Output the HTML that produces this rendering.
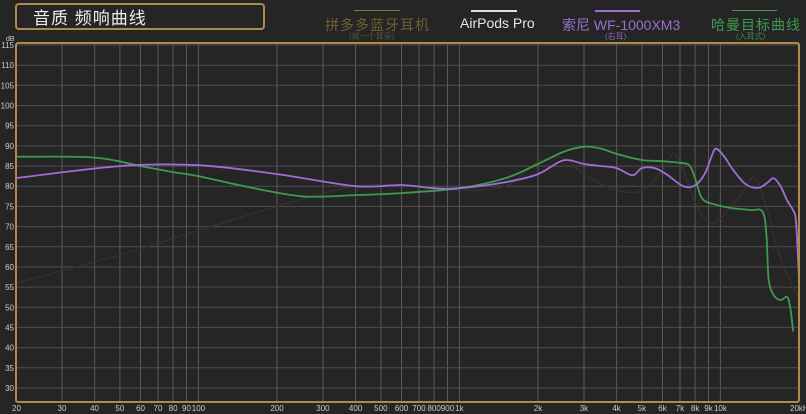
<!DOCTYPE html>
<html><head><meta charset="utf-8">
<style>
html,body{margin:0;padding:0;background:#252525;width:806px;height:414px;overflow:hidden}
body{font-family:"Liberation Sans","Noto Sans CJK SC",sans-serif;position:relative}
.t{position:absolute;white-space:nowrap}
</style></head><body>
<div style="position:absolute;left:15px;top:3px;width:246px;height:23px;border:2px solid #b08a4a;border-radius:4px;"></div>
<div class="t" style="left:33px;top:4px;font-size:17px;color:#eee;letter-spacing:1px">音质 频响曲线</div>

<div style="position:absolute;left:354px;top:10px;width:46px;height:1px;background:#8a7238"></div>
<div class="t" style="left:325px;top:15px;font-size:14px;color:#6f6030;letter-spacing:1px">拼多多蓝牙耳机</div>
<div class="t" style="left:349px;top:31px;font-size:8px;color:#5f5530">(就一个耳朵)</div>

<div style="position:absolute;left:471px;top:10px;width:46px;height:2px;background:#ddd"></div>
<div class="t" style="left:460px;top:15px;font-size:14px;color:#e6e6e6">AirPods Pro</div>

<div style="position:absolute;left:595px;top:10px;width:45px;height:2px;background:#9a6fd0"></div>
<div class="t" style="left:562px;top:15px;font-size:14px;color:#9a6fd0">索尼 WF-1000XM3</div>
<div class="t" style="left:605px;top:31px;font-size:8px;color:#8a60c0">(右耳)</div>

<div style="position:absolute;left:732px;top:10px;width:45px;height:1px;background:#3f9a4f"></div>
<div class="t" style="left:711px;top:15px;font-size:14px;color:#3f9a4f;letter-spacing:1px">哈曼目标曲线</div>
<div class="t" style="left:736px;top:31px;font-size:8px;color:#3a8a48">(入耳式)</div>

<svg id="s" width="806" height="414" style="position:absolute;left:0;top:0" xmlns="http://www.w3.org/2000/svg"></svg>
<script>
var L=16,R=799,T=43,B=402;
function X(f){return L+(R-L)*Math.log10(f/20)/3}
function Y(v){return 45+(115-v)*4.035}
var s='';
var fs=[20,30,40,50,60,70,80,90,100,200,300,400,500,600,700,800,900,1000,2000,3000,4000,5000,6000,7000,8000,9000,10000];
fs.forEach(function(f){var x=X(f).toFixed(1);s+='<line x1="'+x+'" y1="'+T+'" x2="'+x+'" y2="'+B+'" stroke="#5a5a5a" stroke-width="1"/>';});
for(var v=115;v>=30;v-=5){var y=Y(v).toFixed(1);s+='<line x1="'+L+'" y1="'+y+'" x2="'+R+'" y2="'+y+'" stroke="#4e4e4e" stroke-width="1"/>';
s+='<text x="14" y="'+(Y(v)+3)+'" font-size="8" fill="#ccc" text-anchor="end" font-family="Liberation Sans">'+v+'</text>';}
s+='<text x="6" y="41" font-size="7" fill="#ccc" font-family="Liberation Sans">dB</text>';
var lab=[[20,'20'],[30,'30'],[40,'40'],[50,'50'],[60,'60'],[70,'70'],[80,'80'],[90,'90'],[100,'100'],[200,'200'],[300,'300'],[400,'400'],[500,'500'],[600,'600'],[700,'700'],[800,'800'],[900,'900'],[1000,'1k'],[2000,'2k'],[3000,'3k'],[4000,'4k'],[5000,'5k'],[6000,'6k'],[7000,'7k'],[8000,'8k'],[9000,'9k'],[10000,'10k']];
lab.forEach(function(a){var x=X(a[0]);var anc=a[0]==20?'start':'middle';s+='<text x="'+(a[0]==20?12:x)+'" y="411" font-size="8" fill="#ccc" text-anchor="'+anc+'" font-family="Liberation Sans">'+a[1]+'</text>';});
s+='<text x="790" y="411" font-size="8" fill="#ccc" font-family="Liberation Sans">20kHz</text>';
function smooth(d){var pts=d.map(function(q){return [X(q[0]),Y(q[1])]});var p='M'+pts[0][0]+' '+pts[0][1];
for(var i=0;i<pts.length-1;i++){var p0=pts[Math.max(i-1,0)],p1=pts[i],p2=pts[i+1],p3=pts[Math.min(i+2,pts.length-1)];
p+='C'+(p1[0]+(p2[0]-p0[0])/6).toFixed(1)+' '+(p1[1]+(p2[1]-p0[1])/6).toFixed(1)+' '+(p2[0]-(p3[0]-p1[0])/6).toFixed(1)+' '+(p2[1]-(p3[1]-p1[1])/6).toFixed(1)+' '+p2[0].toFixed(1)+' '+p2[1].toFixed(1);}return p}
var gold=[[20,56],[50,63],[100,69],[200,75],[400,80],[700,80],[1000,79],[1500,80],[2000,86],[2500,87],[3000,83],[4000,79],[5000,79],[6000,84],[6600,88],[7200,84],[8000,76],[9000,71],[10000,72],[12000,78],[13500,82],[15000,75],[17000,62],[20000,52]];
s+='<path d="'+smooth(gold)+'" fill="none" stroke="#38332a" stroke-width="1.2"/>';
var green=[[20,87.3],[40,87.1],[60,85],[80,83.5],[100,82.5],[150,80],[250,77.5],[400,77.8],[600,78.3],[1000,79.5],[1500,82],[2000,85.5],[2500,88.5],[3000,89.8],[3500,89.3],[4000,88],[5000,86.5],[6000,86.2],[7000,85.8],[7600,85.2],[8000,82],[8500,77],[9500,75.5],[11000,74.6],[13000,74.1],[14500,73.7],[15000,68],[15300,57],[16000,53],[17000,51.8],[18000,52.6],[18500,50],[19000,44]];
s+='<path d="'+smooth(green)+'" fill="none" stroke="#3f9a4f" stroke-width="1.8"/>';
var purple=[[20,82],[50,85],[100,85.2],[200,83],[400,80],[600,80.3],[800,79.5],[1000,79.5],[1500,81],[2000,83],[2500,86.4],[3000,85.5],[3500,85],[4000,84.5],[4600,82.7],[5000,84.5],[5600,84.5],[6200,83],[7200,80],[8000,80.2],[8700,83],[9200,87],[9600,89.3],[10300,87.5],[11200,84],[12500,80.5],[14000,79.6],[15200,81],[16000,82],[17000,80],[18000,76.5],[19000,74],[19500,71],[20000,57]];
s+='<path d="'+smooth(purple)+'" fill="none" stroke="#a06ed8" stroke-width="1.8"/>';
s+='<rect x="'+L+'" y="'+T+'" width="'+(R-L)+'" height="'+(B-T)+'" rx="2" fill="none" stroke="#b08a4a" stroke-width="2"/>';
document.getElementById('s').innerHTML=s;
</script>
</body></html>
